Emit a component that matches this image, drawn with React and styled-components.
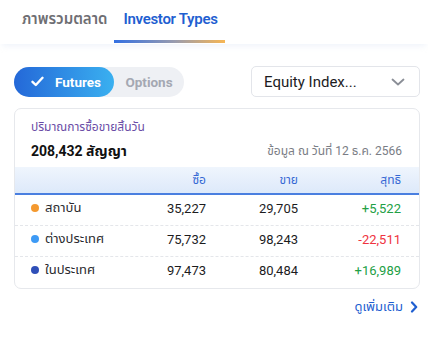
import styled, { createGlobalStyle } from 'styled-components'

const rows = [
  { name: 'สถาบัน', dot: '#f4992f', buy: '35,227', sell: '29,705', net: '+5,522' },
  { name: 'ต่างประเทศ', dot: '#3d9af5', buy: '75,732', sell: '98,243', net: '-22,511' },
  { name: 'ในประเทศ', dot: '#2f4fb8', buy: '97,473', sell: '80,484', net: '+16,989' },
]

const GlobalStyle = createGlobalStyle`
  body {
    margin: 0;
    background: #ffffff;
    font-family: Roboto, "Noto Sans Thai", "Noto Sans", sans-serif;
    color: #1c1c1e;
  }
`

export default function App() {
  return (
    <Page>
      <GlobalStyle />
      <Tabs>
        <Tab>ภาพรวมตลาด</Tab>
        <Tab active>Investor Types</Tab>
      </Tabs>
      <Content>
        <Controls>
          <Toggle>
            <ToggleOption active>
              <svg width="13" height="11" viewBox="0 0 13 11" fill="none">
                <path d="M1.5 5.8 L4.8 9 L11.5 1.8" stroke="#fff" strokeWidth="2.4" strokeLinecap="round" strokeLinejoin="round" />
              </svg>
              Futures
            </ToggleOption>
            <ToggleOption>Options</ToggleOption>
          </Toggle>
          <Select>
            <span>Equity Index...</span>
            <svg width="14" height="8" viewBox="0 0 14 8" fill="none">
              <path d="M1.5 1.5 L7 6.5 L12.5 1.5" stroke="#8a8e96" strokeWidth="1.8" strokeLinecap="round" strokeLinejoin="round" />
            </svg>
          </Select>
        </Controls>
        <Card>
          <CardHead>
            <Caption>ปริมาณการซื้อขายสิ้นวัน</Caption>
            <Summary>
              <Total>208,432 สัญญา</Total>
              <DateNote>ข้อมูล ณ วันที่ 12 ธ.ค. 2566</DateNote>
            </Summary>
          </CardHead>
          <Table>
            <HeaderRow>
              <span />
              <HeadCell>ซื้อ</HeadCell>
              <HeadCell>ขาย</HeadCell>
              <HeadCell>สุทธิ</HeadCell>
            </HeaderRow>
            {rows.map((r) => (
              <Row key={r.name}>
                <Label>
                  <Dot color={r.dot} />
                  {r.name}
                </Label>
                <Num>{r.buy}</Num>
                <Num>{r.sell}</Num>
                <Num net={r.net.startsWith('-') ? 'down' : 'up'}>{r.net}</Num>
              </Row>
            ))}
          </Table>
        </Card>
        <More>
          ดูเพิ่มเติม
          <svg width="8" height="12" viewBox="0 0 8 12" fill="none">
            <path d="M2 1.5 L6.2 6 L2 10.5" stroke="#1f5fd1" strokeWidth="2.2" strokeLinecap="round" strokeLinejoin="round" />
          </svg>
        </More>
      </Content>
    </Page>
  )
}

const Page = styled.div`
  width: 428px;
  height: 339px;
  background: #fff;
`

const Tabs = styled.div`
  display: flex;
  padding: 0 13px;
  height: 44px;
  background: #fff;
  box-shadow: 0 4px 6px -2px rgba(210, 220, 240, 0.35);
  position: relative;
`

const Tab = styled.div`
  position: relative;
  padding: 0 7px 0 9px;
  display: flex;
  align-items: center;
  height: 38px;
  font-size: 15px;
  font-weight: 600;
  letter-spacing: ${(p) => (p.active ? '-0.3px' : '0')};
  color: ${(p) => (p.active ? '#1f5fd1' : '#6e6e73')};

  &::after {
    content: '';
    display: ${(p) => (p.active ? 'block' : 'none')};
    position: absolute;
    left: 0;
    right: 0;
    bottom: -5px;
    height: 3px;
    background: linear-gradient(90deg, #3470e2 0%, #9a9cae 55%, #f7b654 100%);
  }
`

const Content = styled.div`
  padding: 22px 8px 0 14px;
`

const Controls = styled.div`
  display: flex;
  justify-content: space-between;
  align-items: center;
  height: 31px;
`

const Toggle = styled.div`
  display: flex;
  width: 170px;
  height: 30px;
  border-radius: 15px;
  background: #eef0f4;
`

const ToggleOption = styled.div`
  display: flex;
  align-items: center;
  justify-content: ${(p) => (p.active ? 'flex-start' : 'center')};
  gap: 11px;
  width: ${(p) => (p.active ? '100px' : '70px')};
  height: 30px;
  border-radius: 15px;
  font-size: 13.5px;
  font-weight: 700;
  color: ${(p) => (p.active ? '#fff' : '#a4a8b2')};
  background: ${(p) => (p.active ? 'linear-gradient(90deg, #2468d8 0%, #3ab0f0 100%)' : 'transparent')};
  padding-left: ${(p) => (p.active ? '17px' : '0')};
  box-sizing: border-box;
`

const Select = styled.div`
  box-sizing: border-box;
  width: 169px;
  height: 31px;
  display: flex;
  align-items: center;
  justify-content: space-between;
  padding: 0 14px 0 12px;
  border: 1px solid #e3e5ea;
  border-radius: 5px;
  font-size: 15px;
  color: #1c1c1e;
`

const Card = styled.div`
  margin-top: 11px;
  width: 406px;
  box-sizing: border-box;
  border: 1px solid #e6e8ec;
  border-radius: 7px;
  overflow: hidden;
`

const CardHead = styled.div`
  padding: 9px 17px 6px 16px;
`

const Caption = styled.div`
  font-size: 12px;
  color: #6a4ca6;
  line-height: 18px;
`

const Summary = styled.div`
  display: flex;
  justify-content: space-between;
  align-items: center;
  margin-top: 5px;
  line-height: 20px;
`

const Total = styled.div`
  font-size: 14px;
  font-weight: 700;
  color: #111;
`

const DateNote = styled.div`
  font-size: 12px;
  color: #7a7d85;
`

const Table = styled.div`
  padding-bottom: 1px;
`

const grid = `
  display: grid;
  grid-template-columns: 1fr 70px 92px 103px;
  padding: 0 18px 0 16px;
  align-items: center;
`

const HeaderRow = styled.div`
  ${grid}
  height: 26px;
  background: linear-gradient(to bottom, #eff5fd 0%, #dde9fa 100%);
  border-bottom: 2px solid #4a7fe0;
`

const HeadCell = styled.div`
  text-align: right;
  font-size: 12px;
  color: #3568d4;
`

const Row = styled.div`
  ${grid}
  height: 26px;
  padding-bottom: 4px;
  box-sizing: content-box;
  border-bottom: 1px dashed #e4e6ea;

  &:first-of-type {
    height: 24px;
  }

  &:last-child {
    border-bottom: none;
  }
`

const Label = styled.div`
  display: flex;
  align-items: center;
  gap: 6px;
  font-size: 13px;
  color: #2a2a2e;
`

const Dot = styled.span`
  width: 8px;
  height: 8px;
  border-radius: 50%;
  background: ${(p) => p.color};
`

const Num = styled.div`
  text-align: right;
  font-size: 13px;
  color: ${(p) => (p.net === 'up' ? '#22a045' : p.net === 'down' ? '#ef3340' : '#1c1c1e')};
`

const More = styled.div`
  display: flex;
  justify-content: flex-end;
  align-items: center;
  gap: 7px;
  margin-top: 8px;
  padding-right: 2px;
  font-size: 13px;
  color: #1f5fd1;
`
